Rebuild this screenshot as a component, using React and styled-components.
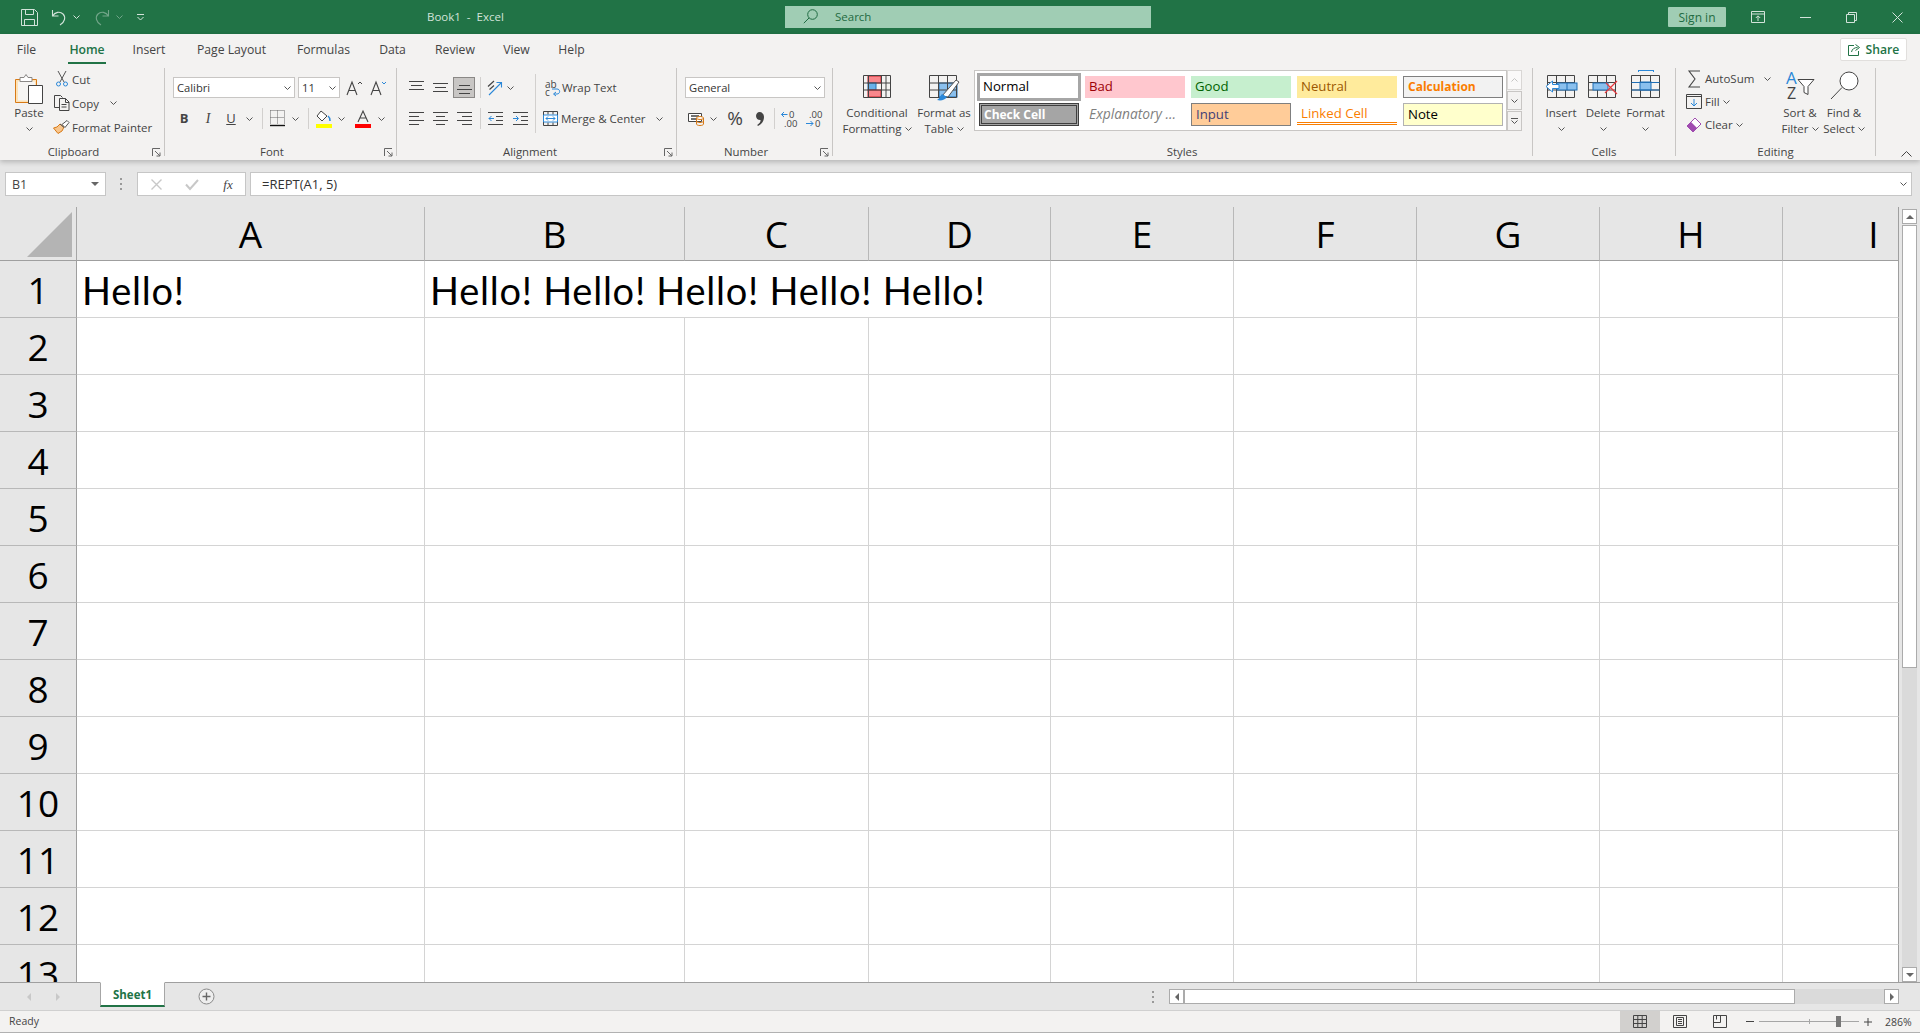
import React from "react";
import styled, { createGlobalStyle } from "styled-components";

const GlobalStyle = createGlobalStyle`
  html, body { margin: 0; padding: 0; background: #e6e6e6; }
  * { box-sizing: border-box; }
`;

const UI = `"Open Sans", "Noto Sans", sans-serif`;
const INK = "#444";
const BLUE = "#2b88d8";

/* ---------- page ---------- */
const Page = styled.div`
  width: 1920px;
  height: 1033px;
  display: flex;
  flex-direction: column;
  overflow: hidden;
  font-family: ${UI};
  font-size: 11.5px;
  color: ${INK};
`;

/* ---------- title bar ---------- */
const TitleBar = styled.div`
  height: 34px;
  flex: none;
  background: #217346;
  color: #d3e3da;
  display: flex;
  align-items: center;
`;
const Quick = styled.div`
  width: ${(p) => p.$w}px;
  margin-left: ${(p) => p.$ml || 0}px;
  flex: none;
  display: flex;
  align-items: center;
  justify-content: center;
  opacity: ${(p) => (p.$dim ? 0.45 : 1)};
`;
const DocTitle = styled.div`
  width: 358px;
  padding-left: 283px;
  flex: none;
  font-size: 11.5px;
  white-space: pre;
  margin-top: -2px;
`;
const SearchBox = styled.div`
  width: 366px;
  height: 22px;
  flex: none;
  background: #a0cdb4;
  color: #1f6b42;
  display: flex;
  align-items: center;
  gap: 17px;
  padding: 0 0 1px 18px;
  font-size: 11.5px;
`;
const SignIn = styled.div`
  width: 58px;
  height: 20px;
  margin-left: 517px;
  flex: none;
  background: #a0cdb4;
  color: #1f6b42;
  border-radius: 1px;
  display: flex;
  align-items: center;
  justify-content: center;
  font-size: 12px;
`;

/* ---------- ribbon ---------- */
const Ribbon = styled.div`
  height: 126px;
  flex: none;
  background: #f3f2f1;
  position: relative;
  box-shadow: 0 2px 5px rgba(0, 0, 0, 0.22);
`;
const TabRow = styled.div`
  height: 32px;
  display: flex;
  align-items: center;
  padding-left: 17px;
  position: relative;
`;
const Tab = styled.div`
  width: ${(p) => p.$w}px;
  margin-right: ${(p) => p.$gap}px;
  height: 28px;
  display: flex;
  align-items: center;
  justify-content: center;
  flex: none;
  white-space: nowrap;
  font-size: 12.2px;
  position: relative;
  color: ${(p) => (p.$active ? "#217346" : INK)};
  font-weight: ${(p) => (p.$active ? 600 : 400)};
  border-bottom: ${(p) => (p.$active ? "2px solid #217346" : "2px solid transparent")};
  padding-top: 1px;
`;
const ShareBtn = styled.div`
  position: absolute;
  left: 1840px;
  top: 4px;
  width: 67px;
  height: 23px;
  background: #fff;
  border: 1px solid #e1dfdd;
  border-radius: 2px;
  color: #217346;
  display: flex;
  align-items: center;
  justify-content: center;
  gap: 5px;
  font-size: 12.2px;
  font-weight: 600;
`;
const Groups = styled.div`
  display: flex;
  padding-top: 2px;
`;
const Group = styled.div`
  width: ${(p) => p.$w}px;
  height: 88px;
  flex: none;
  display: flex;
  flex-direction: column;
  position: relative;
  border-right: ${(p) => (p.$last ? "none" : "1px solid #c8c6c4")};
`;
const Body = styled.div`
  height: 77px;
  flex: none;
  display: flex;
  align-items: flex-start;
`;
const GroupLabel = styled.div`
  height: 14px;
  line-height: 14px;
  flex: none;
  text-align: center;
  font-size: 11.4px;
  padding-right: ${(p) => p.$pr || 0}px;
`;
const Launcher = styled.div`
  position: absolute;
  right: 3px;
  bottom: -1px;
  width: 9px;
  height: 9px;
  display: flex;
`;
const Col = styled.div`
  display: flex;
  flex-direction: column;
  flex: none;
  width: ${(p) => (p.$w ? `${p.$w}px` : "auto")};
  margin-left: ${(p) => p.$ml || 0}px;
  margin-top: ${(p) => p.$mt || 0}px;
  padding-top: ${(p) => p.$pt || 0}px;
  gap: ${(p) => p.$gap || 0}px;
`;
const Row = styled.div`
  display: flex;
  align-items: center;
  height: ${(p) => p.$h || 21}px;
  flex: none;
  padding-left: ${(p) => p.$pl || 0}px;
`;
const Tool = styled.div`
  width: ${(p) => p.$w}px;
  height: ${(p) => p.$h || 21}px;
  margin-left: ${(p) => p.$ml || 0}px;
  flex: none;
  display: flex;
  align-items: center;
  justify-content: center;
  ${(p) => p.$on && "background: #c8c6c4; border: 1px solid #8a8886;"}
`;
const Glyph = styled.span`
  font-family: ${(p) => (p.$serif ? `"Liberation Serif", serif` : UI)};
  font-size: ${(p) => p.$size || 13}px;
  font-weight: ${(p) => (p.$bold ? 700 : 400)};
  font-style: ${(p) => (p.$italic ? "italic" : "normal")};
  text-decoration: ${(p) => (p.$under ? "underline" : "none")};
  line-height: 1;
`;
const SmallSep = styled.div`
  width: 1px;
  height: 21px;
  flex: none;
  margin-left: ${(p) => p.$ml || 0}px;
  background: #d2d0ce;
`;
const TallSep = styled.div`
  width: 1px;
  height: 59px;
  flex: none;
  margin: 6px 0 0 ${(p) => p.$ml || 0}px;
  background: #d2d0ce;
`;
const Select = styled.div`
  width: ${(p) => p.$w}px;
  height: 21px;
  margin-left: ${(p) => p.$ml || 0}px;
  flex: none;
  background: #fff;
  border: 1px solid #c8c6c4;
  color: #333;
  display: flex;
  align-items: center;
  justify-content: space-between;
  padding: 0 3px 0 3px;
  font-size: 11.2px;
`;
const TextRow = styled.div`
  height: ${(p) => p.$h}px;
  display: flex;
  align-items: center;
  white-space: nowrap;
  flex: none;
`;
const Label = styled.span`
  margin-left: ${(p) => p.$ml || 0}px;
  flex: none;
`;
const IconSlot = styled.div`
  width: ${(p) => p.$w}px;
  margin-left: ${(p) => p.$ml || 0}px;
  flex: none;
  display: flex;
  justify-content: center;
`;
const Big = styled.div`
  width: ${(p) => p.$w}px;
  margin-left: ${(p) => p.$ml || 0}px;
  padding-left: ${(p) => p.$pl || 0}px;
  flex: none;
  display: flex;
  flex-direction: column;
  align-items: center;
`;
const BigIcon = styled.div`
  height: 37px;
  padding-bottom: ${(p) => p.$pb ?? 7}px;
  display: flex;
  align-items: flex-end;
  justify-content: center;
  flex: none;
`;
const BigLine = styled.div`
  height: 16px;
  line-height: 16px;
  display: flex;
  align-items: center;
  gap: 3px;
  white-space: nowrap;
  flex: none;
`;

/* styles gallery */
const Gallery = styled.div`
  width: 533px;
  height: 61px;
  margin: 2px 0 0 ${(p) => p.$ml}px;
  flex: none;
  background: #fff;
  border: 1px solid #c8c6c4;
  display: grid;
  grid-template-columns: 108px 106px 106px 106px 100px;
  grid-template-rows: 28px 23px;
  row-gap: 2px;
  padding: 2px 0 0 2px;
  font-size: 13.2px;
`;
const StyleCell = styled.div`
  display: flex;
  align-items: center;
  white-space: nowrap;
  overflow: hidden;
  padding-left: ${(p) => p.$pl ?? 4}px;
  padding-bottom: ${(p) => p.$pb ?? 2}px;
  background: ${(p) => p.$bg || "transparent"};
  color: ${(p) => p.$fg || "#000"};
  border: ${(p) => p.$border || "none"};
  font-weight: ${(p) => (p.$bold ? 700 : 400)};
  font-size: ${(p) => (p.$bold ? "12px" : p.$italic ? "13.8px" : "inherit")};
  font-style: ${(p) => (p.$italic ? "italic" : "normal")};
  width: ${(p) => p.$w || 100}px;
  margin: ${(p) => p.$m || "0"};
  ${(p) => p.$linked && "border-bottom: 3px double #fa7d00; height: 22px;"}
`;
const GalleryScroll = styled.div`
  width: 15px;
  height: 61px;
  margin-top: 2px;
  flex: none;
  display: flex;
  flex-direction: column;
  gap: 1px;
`;
const GalleryBtn = styled.div`
  height: ${(p) => p.$h}px;
  background: ${(p) => (p.$off ? "#fff" : "#f3f2f1")};
  border: 1px solid #c8c6c4;
  display: flex;
  align-items: center;
  justify-content: center;
  opacity: ${(p) => (p.$off ? 0.6 : 1)};
`;
const Collapse = styled.div`
  position: absolute;
  left: 1901px;
  bottom: 3px;
  display: flex;
`;

/* ---------- formula bar ---------- */
const FormulaArea = styled.div`
  height: 47px;
  flex: none;
  background: #e6e6e6;
  display: flex;
  align-items: flex-start;
  padding: 12px 8px 0 5px;
`;
const NameBox = styled.div`
  width: 101px;
  height: 24px;
  flex: none;
  background: #fff;
  border: 1px solid #c6c6c6;
  display: flex;
  align-items: center;
  justify-content: space-between;
  padding: 0 6px 0 6px;
  font-size: 12.5px;
  color: #444;
`;
const Dots = styled.div`
  width: ${(p) => p.$w}px;
  height: ${(p) => p.$h || 24}px;
  flex: none;
  display: flex;
  align-items: center;
  justify-content: center;
`;
const FxBox = styled.div`
  width: 109px;
  height: 24px;
  flex: none;
  background: #fff;
  border: 1px solid #c6c6c6;
  display: flex;
  align-items: center;
`;
const FormulaInput = styled.div`
  flex: 1;
  height: 24px;
  margin-left: 4px;
  background: #fff;
  border: 1px solid #c6c6c6;
  display: flex;
  align-items: center;
  justify-content: space-between;
  padding: 0 4px 0 11px;
  font-size: 13px;
  color: #333;
`;

/* ---------- sheet ---------- */
const SheetRow = styled.div`
  height: 775px;
  flex: none;
  display: flex;
  background: #e6e6e6;
`;
const Sheet = styled.div`
  width: 1899px;
  flex: none;
  overflow: hidden;
  display: grid;
  grid-template-columns: 77px 348px 260px 184px 182px 183px 183px 183px 183px 116px;
  grid-auto-rows: 57px;
  grid-template-rows: 54px;
  background: #fff;
  color: #000;
`;
const Corner = styled.div`
  background: #e6e6e6;
  border-right: 1px solid #a6a6a6;
  border-bottom: 1px solid #9f9f9f;
  display: flex;
  align-items: flex-end;
  justify-content: flex-end;
  padding: 0 4px 3px 0;
`;
const ColHead = styled.div`
  background: #e6e6e6;
  border-right: 1px solid #b8b8b8;
  border-bottom: 1px solid #9f9f9f;
  display: flex;
  align-items: center;
  justify-content: center;
  font-size: 37px;
  padding-left: ${(p) => p.$shift || 0}px;
  overflow: hidden;
  ${(p) => p.$last && "border-right: 1px solid #9f9f9f;"}
`;
const RowHead = styled.div`
  grid-column: 1;
  background: #e6e6e6;
  border-right: 1px solid #9f9f9f;
  border-bottom: 1px solid #b8b8b8;
  display: flex;
  align-items: center;
  justify-content: center;
  font-size: 37px;
  padding-top: 1px;
`;
const DataCell = styled.div`
  grid-column: span ${(p) => p.$span || 1};
  border-right: 1px solid ${(p) => (p.$last ? "#9f9f9f" : "#d4d4d4")};
  border-bottom: 1px solid #d4d4d4;
  display: flex;
  align-items: center;
  padding: 1px 0 0 5px;
  font-family: "Lato", "Liberation Sans", sans-serif;
  font-size: 38px;
  letter-spacing: 0.75px;
  white-space: nowrap;
`;
const VScroll = styled.div`
  width: 21px;
  flex: none;
  padding: 2px 3px 0 3px;
  display: flex;
  flex-direction: column;
`;
const ScrollBtn = styled.div`
  width: ${(p) => p.$w || 15}px;
  height: 15px;
  flex: none;
  background: #fff;
  border: 1px solid #ababab;
  display: flex;
  align-items: center;
  justify-content: center;
`;
const VThumb = styled.div`
  height: 443px;
  flex: none;
  margin-top: 1px;
  background: #fff;
  border: 1px solid #ababab;
`;
const VTrack = styled.div`
  flex: 1;
  background: #dadada;
`;

/* ---------- sheet tabs ---------- */
const TabBar = styled.div`
  height: 28px;
  flex: none;
  background: #e6e6e6;
  border-top: 1px solid #9f9f9f;
  display: flex;
  align-items: flex-start;
`;
const SheetTab = styled.div`
  width: 65px;
  height: 25px;
  margin-top: -1px;
  flex: none;
  background: #fff;
  border: 1px solid #a6a6a6;
  border-top-color: #fff;
  border-bottom: 2px solid #217346;
  color: #217346;
  font-weight: 700;
  font-size: 11.5px;
  display: flex;
  align-items: center;
  justify-content: center;
`;
const HScroll = styled.div`
  width: 730px;
  height: 15px;
  margin: 6px 0 0 ${(p) => p.$ml || 0}px;
  flex: none;
  display: flex;
`;
const HThumb = styled.div`
  width: 611px;
  flex: none;
  background: #fff;
  border: 1px solid #ababab;
`;
const HTrack = styled.div`
  flex: 1;
  background: #dadada;
`;

/* ---------- status bar ---------- */
const StatusBar = styled.div`
  height: 23px;
  flex: none;
  background: #f3f2f1;
  border-top: 1px solid #d0d0d0;
  border-bottom: 1px solid #b1b1b1;
  display: flex;
  align-items: center;
  padding-left: 8px;
  font-size: 10.5px;
`;
const Ready = styled.div`
  width: 1612px;
  flex: none;
  padding: 0 0 2px 1px;
`;
const ViewBtn = styled.div`
  width: 40px;
  height: 21px;
  flex: none;
  display: flex;
  align-items: center;
  justify-content: center;
  background: ${(p) => (p.$on ? "#d2d0ce" : "transparent")};
`;
const ZoomTrack = styled.div`
  width: 100px;
  height: 1px;
  flex: none;
  background: #a6a6a6;
  position: relative;
`;
const ZoomTick = styled.div`
  position: absolute;
  left: 50px;
  top: -2px;
  width: 1px;
  height: 5px;
  background: #a6a6a6;
`;
const ZoomThumb = styled.div`
  position: absolute;
  left: 77px;
  top: -5px;
  width: 5px;
  height: 11px;
  background: #777;
`;
const ZoomPct = styled.div`
  margin-left: 8px;
  flex: none;
  font-size: 10.5px;
`;

/* ---------- icons ---------- */
const Svg = ({ w, h, children, style, ...rest }) => (
  <svg
    width={w}
    height={h}
    viewBox={`0 0 ${w} ${h}`}
    fill="none"
    style={{ display: "block", flex: "none", overflow: "visible", ...style }}
    {...rest}
  >
    {children}
  </svg>
);
const Chev = ({ c = "#555", up }) => (
  <Svg w={7} h={4}>
    <path d={up ? "M.5 3.500 3.500.5l3 3" : "M.5.5 3.500 3.500 6.500.5"} stroke={c} />
  </Svg>
);
const Tri = ({ dir = "down", c = "#666" }) => (
  <Svg w={8} h={8}>
    {dir === "down" && <path d="M0 2h8L4 6z" fill={c} />}
    {dir === "up" && <path d="M0 6h8L4 2z" fill={c} />}
    {dir === "left" && <path d="M6 0v8L2 4z" fill={c} />}
    {dir === "right" && <path d="M2 0v8l4-4z" fill={c} />}
  </Svg>
);
const Lines = ({ rows }) => (
  <Svg w={15} h={13}>
    {rows.map(([a, b, y]) => (
      <path key={y} d={`M${a} ${y + 0.5}H${b}`} stroke="#444" />
    ))}
  </Svg>
);
const LauncherIcon = () => (
  <Svg w={9} h={9}>
    <path d="M.5 8V.5H8M3 3l5 5M8 4.500V8H4.500" stroke="#666" />
  </Svg>
);
const SaveIcon = () => (
  <Svg w={17} h={17}>
    <path d="M.5.5h13l3 3v13H.5zM4.500.5v5h8v-5M3.500 16.500v-6h10v6" stroke="#d3e3da" />
  </Svg>
);
const UndoIcon = ({ flip }) => (
  <Svg w={16} h={17} style={{ transform: flip ? "scaleX(-1)" : "none" }}>
    <path d="M1.500 1v6h6M1.500 7C4 3 9 2 12 5c3 3 2 8-3 11" stroke="#d3e3da" strokeWidth="1.1" />
  </Svg>
);
const CustomizeIcon = () => (
  <Svg w={7} h={7}>
    <path d="M0 .5h7M.5 3l3 3 3-3" stroke="#d3e3da" />
  </Svg>
);
const SearchIcon = () => (
  <Svg w={15} h={15}>
    <circle cx="9.500" cy="5.500" r="4.800" stroke="#1f6b42" />
    <path d="M6 9 .8 14.200" stroke="#1f6b42" />
  </Svg>
);
const RibbonOptIcon = () => (
  <Svg w={14} h={12}>
    <path d="M.5.5h13v11H.5zM.5 3h13M7 10V5M4.800 7 7 4.800 9.200 7" stroke="#d3e3da" />
  </Svg>
);
const MinIcon = () => (
  <Svg w={11} h={1}>
    <path d="M0 .5h11" stroke="#d3e3da" />
  </Svg>
);
const RestoreIcon = () => (
  <Svg w={11} h={11}>
    <path d="M.5 2.500h8v8h-8zM2.500 2.500v-2h8v8h-2" stroke="#d3e3da" />
  </Svg>
);
const CloseIcon = () => (
  <Svg w={11} h={11}>
    <path d="M.5.5l10 10M10.500.5l-10 10" stroke="#d3e3da" />
  </Svg>
);
const ShareIcon = () => (
  <Svg w={13} h={13}>
    <path d="M6 2.500H.5v10h10V8M3.500 9c.5-3 3-4.500 6-4.500M7.500 1.500l4 3-4 3" stroke="#217346" />
  </Svg>
);
const PasteIcon = () => (
  <Svg w={28} h={30}>
    <path d="M.5 6.500h21v23H.5z" fill="#fde3b8" stroke="#d87a16" />
    <path d="M3 8.500h17v19H3z" fill="#f6f5f3" />
    <path d="M5 8.500V4.500h4l2-3 2 3h4v4z" fill="#fff" stroke="#8a8886" />
    <path d="M13.500 12.500h14v18h-14z" fill="#fff" stroke="#444" />
  </Svg>
);
const CutIcon = () => (
  <Svg w={12} h={16}>
    <path d="M2 0l6 11M10 0 4 11" stroke="#555" />
    <circle cx="2.500" cy="13" r="2" stroke={BLUE} />
    <circle cx="9.500" cy="13" r="2" stroke={BLUE} />
  </Svg>
);
const CopyIcon = () => (
  <Svg w={16} h={16}>
    <path d="M5 12.500H.5V.5h6l2 2" stroke="#444" />
    <path d="M5.500 3.500h6l3.500 3.500v8.500H5.500zM11.500 3.500v4H15M7.500 9.500h5M7.500 12h5" stroke="#444" />
  </Svg>
);
const PainterIcon = () => (
  <Svg w={17} h={15}>
    <path d="M.5 8 5 13.500 9 11l2-4-4-3-3 3z" fill="#f8c58c" stroke="#d87a16" />
    <path d="M7 4l4 3.500" stroke="#555" />
    <path d="M9 4.500 14 .5l2 2-4 5z" fill="#fff" stroke="#555" />
  </Svg>
);
const FontBigIcon = ({ up }) => (
  <Svg w={17} h={16}>
    <path d="M1 15 6 2l5 13M3 10.500h6" stroke="#444" strokeWidth="1.1" />
    {up ? <path d="M12 4l2-2 2 2" stroke={INK} /> : <path d="M12 2l2 2 2-2" stroke={BLUE} />}
  </Svg>
);
const BorderIcon = () => (
  <Svg w={15} h={17}>
    <path d="M.5.5h14M.5 7.500h14M.5.5v14M7.500.5v14M14.500.5v14" stroke="#666" strokeDasharray="1 1" />
    <path d="M0 15.500h15" stroke="#111" strokeWidth="1.4" />
  </Svg>
);
const FillIcon = () => (
  <Svg w={16} h={18}>
    <path d="M5 1 1 6l5 5 5-5z" fill="#fff" stroke="#444" />
    <path d="M12 6c1.500 1 2 2.500 2 5" stroke={BLUE} strokeWidth="1.5" />
    <rect x="0" y="14" width="16" height="4" fill="#ffff00" />
  </Svg>
);
const ColorAIcon = () => (
  <Svg w={16} h={18}>
    <path d="M3 12 8 1l5 11M5 8h6" stroke="#444" strokeWidth="1.1" />
    <rect x="0" y="14" width="16" height="4" fill="#ff0000" />
  </Svg>
);
const OrientIcon = () => (
  <Svg w={16} h={16}>
    <path d="M2 15 14 3M9.500 2.500h5v5" stroke={BLUE} strokeWidth="1.1" />
    <path d="M1 6.500 7 1M2.500 9.500l4.500-4" stroke="#444" strokeWidth="1.2" />
  </Svg>
);
const IndentIcon = ({ out }) => (
  <Svg w={15} h={13}>
    <path d="M0 .5h15M8 4.500h7M8 8.500h7M0 12.500h15" stroke="#444" />
    {out ? (
      <path d="M6 6.500H1M3.500 4l-2.500 2.500L3.500 9" stroke={BLUE} />
    ) : (
      <path d="M0 6.500h5M3 4l2.500 2.500L3 9" stroke={BLUE} />
    )}
  </Svg>
);
const WrapIcon = () => (
  <Svg w={16} h={16}>
    <text x="0" y="8" fontSize="10" fontFamily="Open Sans" fill="#444">ab</text>
    <text x="0" y="16" fontSize="10" fontFamily="Open Sans" fill="#444">c</text>
    <path d="M9 14h3c3.500 0 3.500-5 0-5H7M11 12l-2.500 2 2.500 2" stroke={BLUE} />
  </Svg>
);
const MergeIcon = () => (
  <Svg w={15} h={15}>
    <path d="M.5.5h14v14H.5zM5 .5v3M10 .5v3M5 11.500v3M10 11.500v3" stroke="#444" />
    <path d="M.5 4h14v7H.5z" stroke={BLUE} fill="#fff" />
    <path d="M3 7.500h9M5 5.500l-2 2 2 2M10 5.500l2 2-2 2" stroke={BLUE} />
  </Svg>
);
const AccountingIcon = () => (
  <Svg w={16} h={15}>
    <path d="M.5 2.500h13v8H.5z" fill="#fff" stroke="#444" />
    <path d="M3 5h8M3 8h5" stroke="#444" strokeWidth="1.5" />
    <ellipse cx="12" cy="7" rx="3.500" ry="1.500" fill="#fff" stroke="#d87a16" />
    <path d="M8.500 7v6c0 2 7 2 7 0V7M8.500 10c0 2 7 2 7 0" stroke="#d87a16" />
  </Svg>
);
const CommaIcon = () => (
  <Svg w={8} h={14}>
    <path d="M3.500 0C6 0 8 2 8 5c0 4-2.500 7.500-6 9l-.8-1C3.500 11.500 4.500 10 4.600 8 2 8.200 0 6.500 0 4 0 1.800 1.500 0 3.500 0z" fill="#444" />
  </Svg>
);
const DecimalIcon = ({ more }) => (
  <Svg w={16} h={17}>
    {more ? (
      <>
        <text x="8" y="8" fontSize="9.500" fontFamily="Open Sans" fill="#444">0</text>
        <text x="3" y="17" fontSize="9.500" fontFamily="Open Sans" fill="#444">.00</text>
        <path d="M6.500 4.500H.5M3 2 .5 4.500 3 7" stroke={BLUE} />
      </>
    ) : (
      <>
        <text x="3" y="8" fontSize="9.500" fontFamily="Open Sans" fill="#444">.00</text>
        <text x="9" y="17" fontSize="9.500" fontFamily="Open Sans" fill="#444">0</text>
        <path d="M0 13.500h7M4.500 11 7 13.500 4.500 16" stroke={BLUE} />
      </>
    )}
  </Svg>
);
const CondIcon = () => (
  <Svg w={28} h={23}>
    <rect x="5" y="1" width="13" height="7" fill="#f9878c" stroke="#c8252c" />
    <rect x="5" y="8" width="8" height="7" fill="#6ab0e8" stroke="#1f6fb5" />
    <rect x="5" y="15" width="13" height="7" fill="#f9878c" stroke="#c8252c" />
    <path d="M.5.500h27v22H.5zM.5 8h27M.5 15h27M5.500.500v22M18.500.500v22M23 .500v22" stroke="#444" />
  </Svg>
);
const TableIcon = () => (
  <Svg w={31} h={26}>
    <rect x="10" y="8" width="18" height="14" fill="#8ac0ee" stroke="#1f6fb5" />
    <path d="M.5.500h27v22H.5zM.5 8h27M.5 15h27M9.500.500v22M18.500.500v22" stroke="#444" />
    <path d="M13 21 27 5l3 2-11 15z" fill="#fff" stroke="#555" />
    <path d="M13 19c-2 2-3 5-5 6 4 1 8 0 10-3z" fill="#2b88d8" />
  </Svg>
);
const InsertIcon = () => (
  <Svg w={33} h={23}>
    <path d="M2.500.500h27v22h-27zM2.500 7.500h27M2.500 15h27M11.500.500v22M20.500.500v22" stroke="#444" />
    <rect x="12" y="8" width="20" height="7" fill="#8ac0ee" stroke="#1f6fb5" />
    <path d="M22 8v7" stroke="#1f6fb5" />
    <path d="M14 9.500H7.500V6L1 11.500 7.500 17v-3.500H14z" fill="#fff" stroke={BLUE} />
  </Svg>
);
const DeleteIcon = () => (
  <Svg w={30} h={23}>
    <path d="M.5.500h27v22H.5zM.5 7.500h27M.5 15h27M9.500.500v22M18.500.500v22" stroke="#444" />
    <rect x="5" y="8" width="15" height="7" fill="#8ac0ee" stroke="#1f6fb5" />
    <path d="M18 8l11 11M29 6 17 18" stroke="#e8383d" strokeWidth="1.2" />
  </Svg>
);
const FormatIcon = () => (
  <Svg w={29} h={28}>
    <path d="M7 .5h16M7.500 0v2M22.500 0v2" stroke={BLUE} />
    <path d="M.5 5.500h28v22H.5zM.5 12.500h28M.5 20h28M9.500 5.500v22M19.500 5.500v22" stroke="#444" />
    <rect x="9" y="12" width="11" height="8" fill="#8ac0ee" stroke="#1f6fb5" />
    <path d="M.5 12.500h28M.5 20h28" stroke="#1f6fb5" />
  </Svg>
);
const SigmaIcon = () => (
  <Svg w={13} h={18}>
    <path d="M12 1H1l6 8-6 8h11" stroke="#444" strokeWidth="1.1" />
  </Svg>
);
const FillDownIcon = () => (
  <Svg w={16} h={15}>
    <path d="M.5.500h15v14H.5zM.5 2.500h15" stroke="#444" />
    <path d="M8 5v7M5 9l3 3 3-3" stroke={BLUE} />
  </Svg>
);
const ClearIcon = () => (
  <Svg w={16} h={16}>
    <path d="M1 9 9 1l6 6-8 8z" fill="#fff" stroke="#a04bb0" />
    <path d="M1 9l4-4 6 6-4 4z" fill="#a04bb0" />
  </Svg>
);
const SortIcon = () => (
  <Svg w={29} h={28}>
    <text x="0" y="13" fontSize="17" fontFamily="Open Sans" fill={BLUE}>A</text>
    <text x="1" y="28" fontSize="16" fontFamily="Open Sans" fill="#444">Z</text>
    <path d="M12 8.500h16l-6 7v8l-4-2v-6z" fill="#fff" stroke="#444" />
  </Svg>
);
const FindIcon = () => (
  <Svg w={29} h={29}>
    <circle cx="19" cy="10" r="9" fill="#fff" stroke="#444" />
    <path d="M12 16.500 1 28" stroke="#444" />
  </Svg>
);
const DotsIcon = () => (
  <Svg w={3} h={12}>
    <path d="M0 1h3M0 6h3M0 11h3" stroke="#999" strokeWidth="2" strokeDasharray="2 1" />
  </Svg>
);
const XIcon = ({ c }) => (
  <Svg w={11} h={11}>
    <path d="M.5.5l10 10M10.500.5l-10 10" stroke={c} strokeWidth="1.4" />
  </Svg>
);
const CheckIcon = () => (
  <Svg w={14} h={11}>
    <path d="M1 5.500 5 10l8-9" stroke="#c8c8c8" strokeWidth="2" />
  </Svg>
);
const CornerIcon = () => (
  <Svg w={45} h={45}>
    <path d="M45 0v45H0z" fill="#b4b4b4" />
  </Svg>
);
const PlusCircle = () => (
  <Svg w={17} h={17}>
    <circle cx="8.500" cy="8.500" r="7.500" stroke="#8a8a8a" fill="#eee" />
    <path d="M4.500 8.500h8M8.500 4.500v8" stroke="#666" strokeWidth="1.4" />
  </Svg>
);
const NormalView = () => (
  <Svg w={14} h={13}>
    <path d="M.5.500h13v12H.5zM.5 4.500h13M.5 8.500h13M4.800.500v12M9.200.500v12" stroke="#444" />
  </Svg>
);
const LayoutView = () => (
  <Svg w={14} h={13}>
    <path d="M.5.500h13v12H.5z" stroke="#444" />
    <path d="M3.500 2.500h7v8h-7zM5 4.500h4M5 6.500h4M5 8.500h4" stroke="#444" />
  </Svg>
);
const BreakView = () => (
  <Svg w={14} h={13}>
    <path d="M.5.500h13v12H.5zM.5 7.500h7v-7M3.500.500v4" stroke="#444" />
  </Svg>
);

/* ---------- data ---------- */
const TABS = [
  ["File", 19, 32], ["Home", 38, 27], ["Insert", 32, 31], ["Page Layout", 71, 30], ["Formulas", 53, 29],
  ["Data", 27, 29], ["Review", 40, 28], ["View", 27, 28], ["Help", 27, 0],
];
const COLS = ["A", "B", "C", "D", "E", "F", "G", "H", "I"];
const ROWS = Array.from({ length: 13 }, (_, i) => i + 1);

const ToolWithChev = ({ w, cw, ml, children }) => (
  <>
    <Tool $w={w} $ml={ml}>{children}</Tool>
    <Tool $w={cw}><Chev /></Tool>
  </>
);

function GridRow({ n }) {
  return (
    <>
      <RowHead>{n}</RowHead>
      {n === 1 ? (
        <>
          <DataCell>Hello!</DataCell>
          <DataCell $span={3}>Hello! Hello! Hello! Hello! Hello!</DataCell>
          {[0, 1, 2, 3].map((i) => <DataCell key={i} />)}
          <DataCell $last />
        </>
      ) : (
        COLS.map((c) => <DataCell key={c} $last={c === "I"} />)
      )}
    </>
  );
}

export default function App() {
  return (
    <Page>
      <GlobalStyle />
      <TitleBar>
        <Quick $w={18} $ml={20}><SaveIcon /></Quick>
        <Quick $w={18} $ml={12}><UndoIcon /></Quick>
        <Quick $w={9} $ml={4}><Chev c="#d3e3da" /></Quick>
        <Quick $w={18} $ml={12} $dim><UndoIcon flip /></Quick>
        <Quick $w={9} $ml={4} $dim><Chev c="#d3e3da" /></Quick>
        <Quick $w={8} $ml={12}><CustomizeIcon /></Quick>
        <DocTitle>Book1  -  Excel</DocTitle>
        <Quick $w={0} $ml={283} />
        <SearchBox><SearchIcon />Search</SearchBox>
        <SignIn>Sign in</SignIn>
        <Quick $w={14} $ml={25}><RibbonOptIcon /></Quick>
        <Quick $w={11} $ml={35}><MinIcon /></Quick>
        <Quick $w={11} $ml={35}><RestoreIcon /></Quick>
        <Quick $w={11} $ml={35}><CloseIcon /></Quick>
      </TitleBar>

      <Ribbon>
        <TabRow>
          {TABS.map(([t, w, gap]) => (
            <Tab key={t} $w={w} $gap={gap} $active={t === "Home"}>{t}</Tab>
          ))}
          <ShareBtn><ShareIcon />Share</ShareBtn>
        </TabRow>
        <Groups>
          <Group $w={165}>
            <Body>
              <Big $w={50} $ml={4}>
                <Col $pt={5}><PasteIcon /></Col>
                <BigLine style={{ marginTop: 2 }}>Paste</BigLine>
                <Col $pt={6}><Chev /></Col>
              </Big>
              <Col $ml={-1} $mt={-1}>
                <TextRow $h={24}><IconSlot $w={17}><CutIcon /></IconSlot><Label $ml={2}>Cut</Label></TextRow>
                <TextRow $h={24}><IconSlot $w={17}><CopyIcon /></IconSlot><Label $ml={2}>Copy</Label><Label $ml={11}><Chev /></Label></TextRow>
                <TextRow $h={24}><IconSlot $w={17}><PainterIcon /></IconSlot><Label $ml={2}>Format Painter</Label></TextRow>
              </Col>
            </Body>
            <GroupLabel $pr={17}>Clipboard</GroupLabel>
            <Launcher><LauncherIcon /></Launcher>
          </Group>

          <Group $w={232}>
            <Body>
              <Col $pt={9} $gap={10}>
                <Row $pl={8}>
                  <Select $w={122}>Calibri<Chev /></Select>
                  <Select $w={42} $ml={3}>11<Chev /></Select>
                  <Tool $w={24} $ml={2}><FontBigIcon up /></Tool>
                  <Tool $w={24}><FontBigIcon /></Tool>
                </Row>
                <Row $pl={7}>
                  <Tool $w={24}><Glyph $bold $size={13}>B</Glyph></Tool>
                  <Tool $w={24}><Glyph $italic $serif $size={14}>I</Glyph></Tool>
                  <ToolWithChev w={22} cw={14}><Glyph $under $size={13}>U</Glyph></ToolWithChev>
                  <SmallSep $ml={6} />
                  <Tool $w={26} $ml={1}><BorderIcon /></Tool>
                  <Tool $w={10}><Chev /></Tool>
                  <SmallSep $ml={8} />
                  <Tool $w={24} $ml={3}><FillIcon /></Tool>
                  <Tool $w={10}><Chev /></Tool>
                  <Tool $w={24} $ml={5}><ColorAIcon /></Tool>
                  <Tool $w={12}><Chev /></Tool>
                </Row>
              </Col>
            </Body>
            <GroupLabel $pr={17}>Font</GroupLabel>
            <Launcher><LauncherIcon /></Launcher>
          </Group>

          <Group $w={280}>
            <Body>
              <Col $pt={9} $gap={10}>
                <Row $pl={7}>
                  <Tool $w={24}><Lines rows={[[0, 15, 0], [2, 13, 4], [0, 15, 8]]} /></Tool>
                  <Tool $w={24}><Lines rows={[[0, 15, 2], [2, 13, 6], [0, 15, 10]]} /></Tool>
                  <Tool $w={22} $ml={1} $on><Lines rows={[[2, 13, 4], [0, 15, 8], [2, 13, 12]]} /></Tool>
                  <SmallSep $ml={5} />
                  <Tool $w={22} $ml={3}><OrientIcon /></Tool>
                  <Tool $w={8}><Chev /></Tool>
                </Row>
                <Row $pl={7}>
                  <Tool $w={24}><Lines rows={[[0, 15, 0], [0, 10, 4], [0, 15, 8], [0, 10, 12]]} /></Tool>
                  <Tool $w={24}><Lines rows={[[0, 15, 0], [3, 12, 4], [0, 15, 8], [3, 12, 12]]} /></Tool>
                  <Tool $w={24}><Lines rows={[[0, 15, 0], [5, 15, 4], [0, 15, 8], [5, 15, 12]]} /></Tool>
                  <SmallSep $ml={4} />
                  <Tool $w={22} $ml={3}><IndentIcon out /></Tool>
                  <Tool $w={24} $ml={2}><IndentIcon /></Tool>
                </Row>
              </Col>
              <TallSep $ml={3} />
              <Col $pt={9} $gap={10}>
                <Row $pl={9}><WrapIcon /><Label $ml={1}>Wrap Text</Label></Row>
                <Row $pl={7}><MergeIcon /><Label $ml={3}>Merge &amp; Center</Label><Label $ml={10}><Chev /></Label></Row>
              </Col>
            </Body>
            <GroupLabel $pr={13}>Alignment</GroupLabel>
            <Launcher><LauncherIcon /></Launcher>
          </Group>

          <Group $w={156}>
            <Body>
              <Col $pt={9} $gap={10}>
                <Row><Select $w={140} $ml={8}>General<Chev /></Select></Row>
                <Row $pl={7}>
                  <Tool $w={24}><AccountingIcon /></Tool>
                  <Tool $w={10}><Chev /></Tool>
                  <Tool $w={24} $ml={5}><Glyph $size={19}>%</Glyph></Tool>
                  <Tool $w={24} $ml={1}><CommaIcon /></Tool>
                  <SmallSep $ml={2} />
                  <Tool $w={24} $ml={2}><DecimalIcon more /></Tool>
                  <Tool $w={25}><DecimalIcon /></Tool>
                </Row>
              </Col>
            </Body>
            <GroupLabel $pr={17}>Number</GroupLabel>
            <Launcher><LauncherIcon /></Launcher>
          </Group>

          <Group $w={700}>
            <Body>
              <Big $w={85} $pl={3}>
                <BigIcon><CondIcon /></BigIcon>
                <BigLine>Conditional</BigLine>
                <BigLine>Formatting <Chev /></BigLine>
              </Big>
              <Big $w={52}>
                <BigIcon $pb={4}><TableIcon /></BigIcon>
                <BigLine>Format as</BigLine>
                <BigLine>Table <Chev /></BigLine>
              </Big>
              <Gallery $ml={4}>
                <StyleCell $w={104} $border="3px solid #a6a6a6" $bg="#fff" $pl={3}>Normal</StyleCell>
                <StyleCell $bg="#ffc7ce" $fg="#9c0006" $m="3px 0">Bad</StyleCell>
                <StyleCell $bg="#c6efce" $fg="#006100" $m="3px 0">Good</StyleCell>
                <StyleCell $bg="#ffeb9c" $fg="#9c5700" $m="3px 0">Neutral</StyleCell>
                <StyleCell $bg="#f2f2f2" $fg="#fa7d00" $bold $border="1px solid #7f7f7f" $m="3px 0">Calculation</StyleCell>
                <StyleCell $bg="#a5a5a5" $fg="#fff" $bold $border="3px double #3f3f3f" $m="0 0 0 2px" $pl={2} $pb={0}>Check Cell</StyleCell>
                <StyleCell $fg="#7f7f7f" $italic>Explanatory ...</StyleCell>
                <StyleCell $bg="#ffcc99" $fg="#3f3f76" $border="1px solid #7f7f7f">Input</StyleCell>
                <StyleCell $fg="#fa7d00" $linked $pb={0}>Linked Cell</StyleCell>
                <StyleCell $bg="#ffffcc" $border="1px solid #b2b2b2">Note</StyleCell>
              </Gallery>
              <GalleryScroll>
                <GalleryBtn $h={20} $off><Chev up c="#a6a6a6" /></GalleryBtn>
                <GalleryBtn $h={19}><Chev /></GalleryBtn>
                <GalleryBtn $h={20}><Col $gap={1}><Svg w={7} h={1}><path d="M0 .5h7" stroke="#555" /></Svg><Chev /></Col></GalleryBtn>
              </GalleryScroll>
            </Body>
            <GroupLabel $pr={1}>Styles</GroupLabel>
          </Group>

          <Group $w={143}>
            <Body>
              <Big $w={42} $ml={7}>
                <BigIcon><InsertIcon /></BigIcon>
                <BigLine>Insert</BigLine>
                <BigLine><Chev /></BigLine>
              </Big>
              <Big $w={42}>
                <BigIcon><DeleteIcon /></BigIcon>
                <BigLine>Delete</BigLine>
                <BigLine><Chev /></BigLine>
              </Big>
              <Big $w={43}>
                <BigIcon><FormatIcon /></BigIcon>
                <BigLine>Format</BigLine>
                <BigLine><Chev /></BigLine>
              </Big>
            </Body>
            <GroupLabel>Cells</GroupLabel>
          </Group>

          <Group $w={200}>
            <Body>
              <Col $w={92} $ml={10} $mt={-1}>
                <TextRow $h={23}><IconSlot $w={16}><SigmaIcon /></IconSlot><Label $ml={3}>AutoSum</Label><Label $ml={10}><Chev /></Label></TextRow>
                <TextRow $h={23}><IconSlot $w={16}><FillDownIcon /></IconSlot><Label $ml={3}>Fill</Label><Label $ml={3}><Chev /></Label></TextRow>
                <TextRow $h={23}><IconSlot $w={16}><ClearIcon /></IconSlot><Label $ml={3}>Clear</Label><Label $ml={3}><Chev /></Label></TextRow>
              </Col>
              <Big $w={44}>
                <BigIcon $pb={6}><SortIcon /></BigIcon>
                <BigLine>Sort &amp;</BigLine>
                <BigLine>Filter <Chev /></BigLine>
              </Big>
              <Big $w={44}>
                <BigIcon $pb={5}><FindIcon /></BigIcon>
                <BigLine>Find &amp;</BigLine>
                <BigLine>Select <Chev /></BigLine>
              </Big>
            </Body>
            <GroupLabel>Editing</GroupLabel>
          </Group>
        </Groups>
        <Collapse>
          <Svg w={11} h={6}><path d="M.5 5.500l5-5 5 5" stroke="#444" /></Svg>
        </Collapse>
      </Ribbon>

      <FormulaArea>
        <NameBox>B1<Tri /></NameBox>
        <Dots $w={31}><DotsIcon /></Dots>
        <FxBox>
          <Dots $w={36}><XIcon c="#c8c8c8" /></Dots>
          <Dots $w={36}><CheckIcon /></Dots>
          <Dots $w={36}><Glyph $serif $italic $size={13}>fx</Glyph></Dots>
        </FxBox>
        <FormulaInput>=REPT(A1, 5)<Chev /></FormulaInput>
      </FormulaArea>

      <SheetRow>
        <Sheet>
          <Corner><CornerIcon /></Corner>
          {COLS.map((c) => (
            <ColHead key={c} $shift={c === "I" ? 66 : 0} $last={c === "I"}>{c}</ColHead>
          ))}
          {ROWS.map((n) => <GridRow key={n} n={n} />)}
        </Sheet>
        <VScroll>
          <ScrollBtn><Tri dir="up" /></ScrollBtn>
          <VThumb />
          <VTrack />
          <ScrollBtn><Tri /></ScrollBtn>
        </VScroll>
      </SheetRow>

      <TabBar>
        <Dots $w={58} $h={27}><Tri dir="left" c="#c8c8c8" /></Dots>
        <Dots $w={0} $h={27}><Tri dir="right" c="#c8c8c8" /></Dots>
        <Dots $w={42} $h={27} />
        <SheetTab>Sheet1</SheetTab>
        <Dots $w={82} $h={27}><PlusCircle /></Dots>
        <Dots $w={897} $h={27} />
        <Dots $w={18} $h={27}><DotsIcon /></Dots>
        <HScroll $ml={7}>
          <ScrollBtn><Tri dir="left" /></ScrollBtn>
          <HThumb />
          <HTrack />
          <ScrollBtn><Tri dir="right" /></ScrollBtn>
        </HScroll>
      </TabBar>

      <StatusBar>
        <Ready>Ready</Ready>
        <ViewBtn $on><NormalView /></ViewBtn>
        <ViewBtn><LayoutView /></ViewBtn>
        <ViewBtn><BreakView /></ViewBtn>
        <Dots $w={19} $h={21}><Svg w={8} h={1}><path d="M0 .5h8" stroke="#444" /></Svg></Dots>
        <ZoomTrack><ZoomTick /><ZoomThumb /></ZoomTrack>
        <Dots $w={18} $h={21}><Svg w={8} h={8}><path d="M0 4h8M4 0v8" stroke="#444" /></Svg></Dots>
        <ZoomPct>286%</ZoomPct>
      </StatusBar>
    </Page>
  );
}
